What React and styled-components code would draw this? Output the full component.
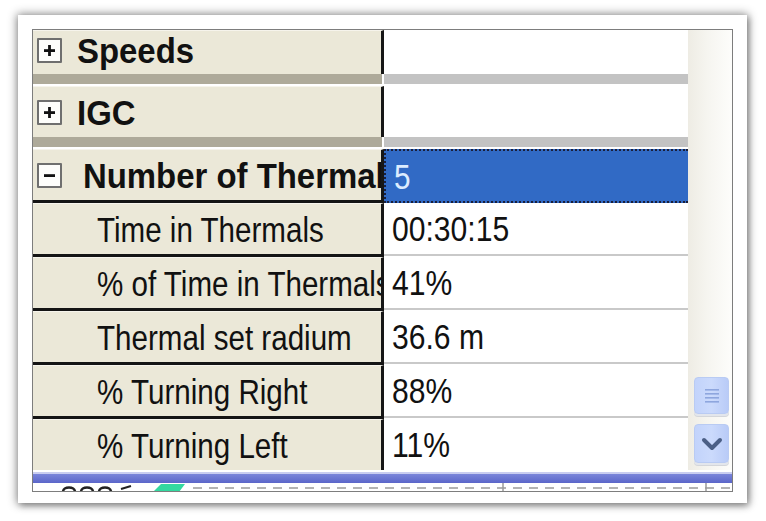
import React from "react";
import styled, { createGlobalStyle } from "styled-components";

const Global = createGlobalStyle`
  html, body { margin: 0; padding: 0; background: #ffffff; }
  body { width: 766px; height: 521px; overflow: hidden; font-family: "Liberation Sans", Arial, sans-serif; }
`;

const Page = styled.div`
  width: 766px;
  height: 521px;
  padding: 15px 0 0 18px;
  box-sizing: border-box;
`;

const Card = styled.div`
  width: 729px;
  height: 488px;
  box-sizing: border-box;
  padding: 14px 14px 11px 14px;
  background: #ffffff;
  box-shadow: 0 0 9px 1px rgba(0, 0, 0, 0.45), 2px 3px 6px rgba(0, 0, 0, 0.25);
`;

const Shot = styled.div`
  width: 701px;
  height: 463px;
  box-sizing: border-box;
  border: 1px solid #7d7d7d;
  display: flex;
  flex-direction: column;
  overflow: hidden;
  background: #ffffff;
`;

const Body = styled.div`
  display: flex;
  height: 440px;
`;

const Grid = styled.div`
  width: 655px;
  display: flex;
  flex-direction: column;
`;

const Row = styled.div`
  display: flex;
  height: ${(p) => p.$h}px;
`;

const NameCell = styled.div`
  flex: none;
  width: 351px;
  box-sizing: border-box;
  background: #ebe8d8;
  border-top: 1px solid #f6f4ec;
  border-bottom: ${(p) => (p.$sep ? "3px solid #141414" : "none")};
  border-right: 3px solid #161616;
  display: flex;
  align-items: center;
  padding-left: ${(p) => p.$pad}px;
  padding-bottom: ${(p) => p.$pb || 0}px;
  overflow: hidden;
  color: #111;
`;

const ValueCell = styled.div`
  flex: 1;
  box-sizing: border-box;
  display: flex;
  align-items: center;
  padding-left: 8px;
  background: ${(p) => (p.$selected ? "#316ac5" : "#ffffff")};
  color: ${(p) => (p.$selected ? "#dcecff" : "#111")};
  border-bottom: ${(p) =>
    p.$selected ? "2px dotted #1a1f3a" : p.$sep ? "2px solid #c9c9c9" : "none"};
  border-top: ${(p) => (p.$selected ? "2px dotted #1a1f3a" : "none")};
  border-left: ${(p) => (p.$selected ? "2px dotted #1a1f3a" : "none")};
  margin-bottom: ${(p) => (p.$sep && !p.$selected ? "1px" : "0")};
  overflow: hidden;
`;

const Band = styled.div`
  display: flex;
  height: 10px;
  border-bottom: 2px solid #ffffff;
`;

const BandLeft = styled.div`
  width: 349px;
  background: #aeaa9a;
`;

const BandRight = styled.div`
  flex: 1;
  margin-left: 2px;
  background: #c3c3c3;
`;

const Text = styled.span`
  display: inline-block;
  white-space: nowrap;
  font-family: "Liberation Sans", Arial, sans-serif;
  font-size: 35px;
  line-height: 1;
  font-weight: ${(p) => (p.$bold ? 700 : 400)};
  transform: scaleX(${(p) => p.$sx});
  transform-origin: left center;
  margin-left: ${(p) => p.$ml || 0}px;
`;

const ToggleBox = styled.span`
  flex: none;
  width: 25px;
  height: 25px;
  box-sizing: border-box;
  border: 2px solid #6f6f6f;
  border-radius: 1px;
  background: #fdfdfb;
  display: flex;
  align-items: center;
  justify-content: center;
`;

const Scroll = styled.div`
  flex: 1;
  background: linear-gradient(to right, #eeece4 0%, #f6f5f0 45%, #fdfdfb 100%);
  display: flex;
  flex-direction: column;
  justify-content: flex-end;
  align-items: flex-start;
  padding: 0 0 7px 6px;
  gap: 10px;
`;

const ScrollPart = styled.div`
  width: 35px;
  height: ${(p) => p.$h}px;
  box-sizing: border-box;
  border-radius: 4px;
  border: 1px solid #b9cbf3;
  background: linear-gradient(to right, #c2d3fb, #cbdafc 50%, #b9cbf7);
  box-shadow: 0 2px 0 #e3e6ec, 0 3px 0 #d4d6da;
  display: flex;
  align-items: center;
  justify-content: center;
`;

const BlueBar = styled.div`
  height: 11px;
  margin-top: 2px;
  border-top: 2px solid #c9cdf0;
  box-sizing: border-box;
  background: linear-gradient(to bottom, #7a85da, #5b66c9);
`;

const Strip = styled.div`
  flex: 1;
  display: flex;
  align-items: center;
  background: #ffffff;
  overflow: hidden;
`;

function Sign({ plus }) {
  return (
    <ToggleBox>
      <svg width="15" height="15" viewBox="0 0 15 15">
        <rect x="2" y="6.2" width="11" height="2.8" fill="#111" />
        {plus && <rect x="6.1" y="2" width="2.8" height="11" fill="#111" />}
      </svg>
    </ToggleBox>
  );
}

const props = [
  { name: "Time in Thermals", value: "00:30:15" },
  { name: "% of Time in Thermals", value: "41%" },
  { name: "Thermal set radium", value: "36.6 m" },
  { name: "% Turning Right", value: "88%" },
  { name: "% Turning Left", value: "11%", last: true },
];

export default function App() {
  return (
    <>
      <Global />
      <Page>
        <Card>
          <Shot>
            <Body>
              <Grid>
                <Row $h={44}>
                  <NameCell $pad={4} $pb={4}>
                    <Sign plus />
                    <Text $bold $sx={0.94} $ml={15}>Speeds</Text>
                  </NameCell>
                  <ValueCell />
                </Row>
                <Band>
                  <BandLeft />
                  <BandRight />
                </Band>
                <Row $h={51}>
                  <NameCell $pad={4}>
                    <Sign plus />
                    <Text $bold $sx={0.94} $ml={15}>IGC</Text>
                  </NameCell>
                  <ValueCell />
                </Row>
                <Band>
                  <BandLeft />
                  <BandRight />
                </Band>
                <Row $h={54}>
                  <NameCell $pad={4} $sep>
                    <Sign />
                    <Text $bold $sx={0.94} $ml={21}>Number of Thermals</Text>
                  </NameCell>
                  <ValueCell $selected>
                    <Text $sx={0.85}>5</Text>
                  </ValueCell>
                </Row>
                {props.map((p) => (
                  <Row key={p.name} $h={p.last ? 51 : 54}>
                    <NameCell $pad={64} $sep={!p.last}>
                      <Text $sx={0.845}>{p.name}</Text>
                    </NameCell>
                    <ValueCell $sep={!p.last}>
                      <Text $sx={0.86}>{p.value}</Text>
                    </ValueCell>
                  </Row>
                ))}
              </Grid>
              <Scroll>
                <ScrollPart $h={37}>
                  <svg width="16" height="16" viewBox="0 0 16 16">
                    {[2, 6, 10, 14].map((y) => (
                      <rect key={y} x="1" y={y - 1} width="14" height="1.6" fill="#8ea6de" />
                    ))}
                  </svg>
                </ScrollPart>
                <ScrollPart $h={39}>
                  <svg width="22" height="14" viewBox="0 0 22 14">
                    <path d="M3 3 L11 11 L19 3" fill="none" stroke="#4b5f86" strokeWidth="4" strokeLinecap="round" strokeLinejoin="round" />
                  </svg>
                </ScrollPart>
              </Scroll>
            </Body>
            <BlueBar />
            <Strip>
              <svg width="699" height="9" viewBox="0 0 699 9">
                <path d="M30 9 C30 3 42 3 42 9 M48 9 C48 3 60 3 60 9 M66 9 C66 3 78 3 78 9" fill="none" stroke="#222" strokeWidth="2.5" />
                <path d="M88 6 L98 3" stroke="#222" strokeWidth="2" />
                <path d="M120 9 L128 1 L152 1 L146 9 Z" fill="#33d8a0" />
                <line x1="160" y1="5" x2="699" y2="5" stroke="#9a9a9a" strokeWidth="1.5" strokeDasharray="9 7" />
                <line x1="470" y1="0" x2="470" y2="9" stroke="#9a9a9a" strokeWidth="1.5" />
                <line x1="673" y1="0" x2="673" y2="9" stroke="#9a9a9a" strokeWidth="1.5" />
              </svg>
            </Strip>
          </Shot>
        </Card>
      </Page>
    </>
  );
}
